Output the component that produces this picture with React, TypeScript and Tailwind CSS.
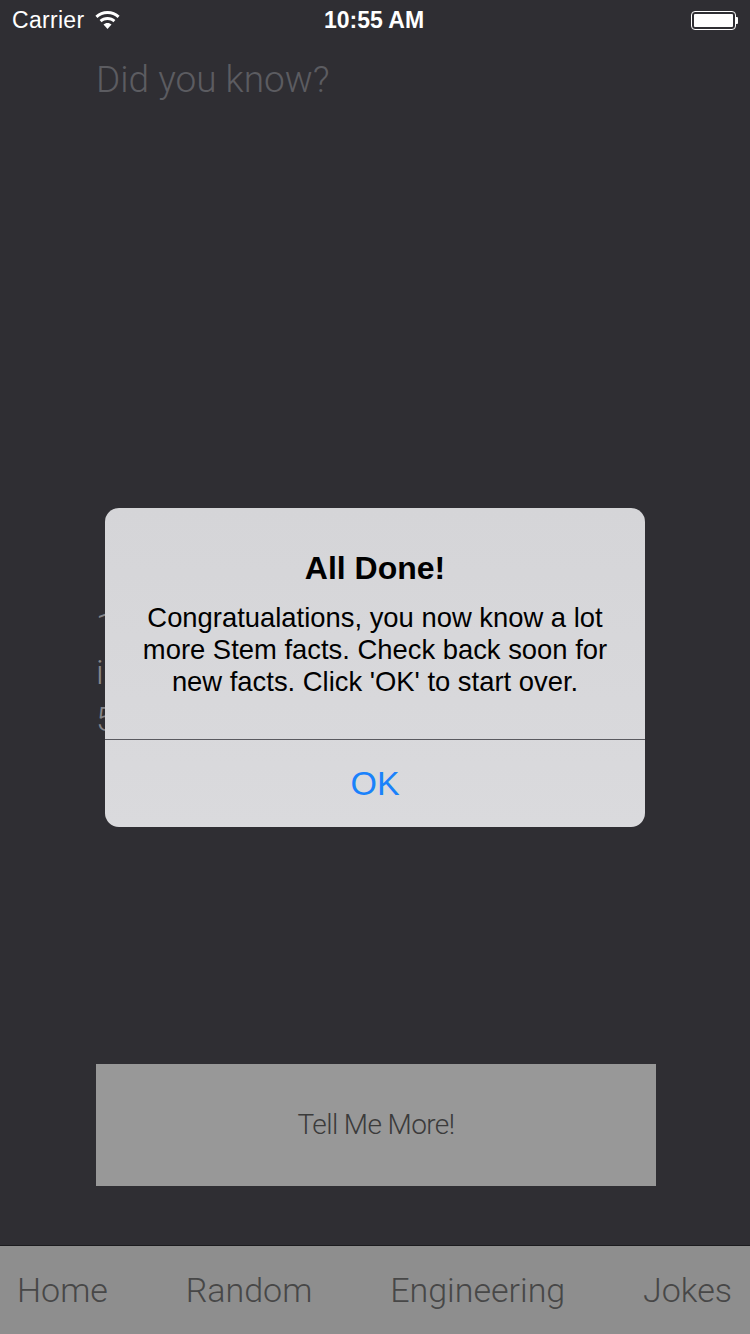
import React from 'react';

const sans = { fontFamily: '"Liberation Sans", Arial, sans-serif' };
const light = { fontFamily: 'Roboto, "Liberation Sans", sans-serif' };

const App: React.FC = () => {
    return (
        <div className="relative h-[1334px] w-[750px] overflow-hidden bg-[#2f2e33] flex flex-col">
            {/* Status bar */}
            <div
                className="h-[40px] flex items-center justify-between px-[12px] text-white text-[23px]"
                style={sans}
            >
                <div className="flex items-center gap-[11px] w-[200px]">
                    <span className="tracking-[0.3px]">Carrier</span>
                    <svg width="25" height="19" viewBox="0 0 25 19" fill="white">
                        <path d="M12.5 0C7.8 0 3.6 1.8 0.4 4.8L2.4 7c2.7-2.5 6.2-4 10.1-4s7.4 1.5 10.1 4l2-2.2C21.4 1.8 17.2 0 12.5 0z" />
                        <path d="M12.5 6c-3 0-5.8 1.2-7.9 3.1l2 2.2c1.6-1.4 3.6-2.3 5.9-2.3s4.3 0.9 5.9 2.3l2-2.2C18.3 7.2 15.5 6 12.5 6z" />
                        <path d="M12.5 12c-1.6 0-3 0.6-4 1.5l4 4.5 4-4.5c-1-0.9-2.4-1.5-4-1.5z" />
                    </svg>
                </div>
                <span className="font-bold pr-[2px]">10:55 AM</span>
                <div className="w-[200px] flex justify-end">
                    <div className="flex items-center">
                        <div className="w-[45px] h-[19px] rounded-[4px] border-[1.5px] border-white p-[2px]">
                            <div className="w-full h-full bg-white rounded-[1px]" />
                        </div>
                        <div className="w-[2px] h-[7px] bg-white rounded-r-[1px]" />
                    </div>
                </div>
            </div>

            {/* Title */}
            <div
                className="mt-[20px] pl-[96px] h-[40px] leading-[40px] text-[37px] font-light text-[#5c5c61]"
                style={light}
            >
                Did you know?
            </div>

            {/* Fact text (behind the alert) */}
            <div
                className="mt-[502px] pl-[96px] pr-[60px] text-[34px] leading-[47px] font-light text-[#86868b]"
                style={light}
            >
                1 out of every 100 people
                <br />
                in the world live to be over
                <br />
                50 years old.
            </div>

            {/* Button */}
            <div className="mt-[321px] ml-[96px] w-[560px] h-[122px] bg-[#989898] flex items-center justify-center">
                <span className="text-[28px] font-light text-[#3b3b3b] tracking-[-0.6px]" style={light}>
                    Tell Me More!
                </span>
            </div>

            <div className="flex-1" />

            {/* Tab bar */}
            <div
                className="h-[89px] border-t border-[#1c1c1f] bg-[#8e8e8e] flex items-center justify-between pl-[17px] pr-[18px] text-[34px] font-light text-[#474747]"
                style={light}
            >
                <span>Home</span>
                <span>Random</span>
                <span>Engineering</span>
                <span>Jokes</span>
            </div>

            {/* Alert */}
            <div
                className="absolute left-[105px] top-[508px] w-[540px] h-[319px] rounded-[14px] bg-gradient-to-b from-[#d5d5d8] to-[#dadadd] flex flex-col"
                style={sans}
            >
                <div className="flex-1 flex flex-col items-center pt-[40px]">
                    <div className="text-[32px] font-bold text-black leading-[40px]">All Done!</div>
                    <div className="mt-[14px] text-[27.4px] leading-[32px] text-black text-center px-[30px]">
                        Congratualations, you now know a lot more Stem facts. Check back soon for new facts. Click 'OK' to start over.
                    </div>
                </div>
                <div className="h-px bg-[#5a5a60]" />
                <div className="h-[87px] flex items-center justify-center text-[34px] text-[#1a82fb]">
                    OK
                </div>
            </div>
        </div>
    );
};

export default App;
